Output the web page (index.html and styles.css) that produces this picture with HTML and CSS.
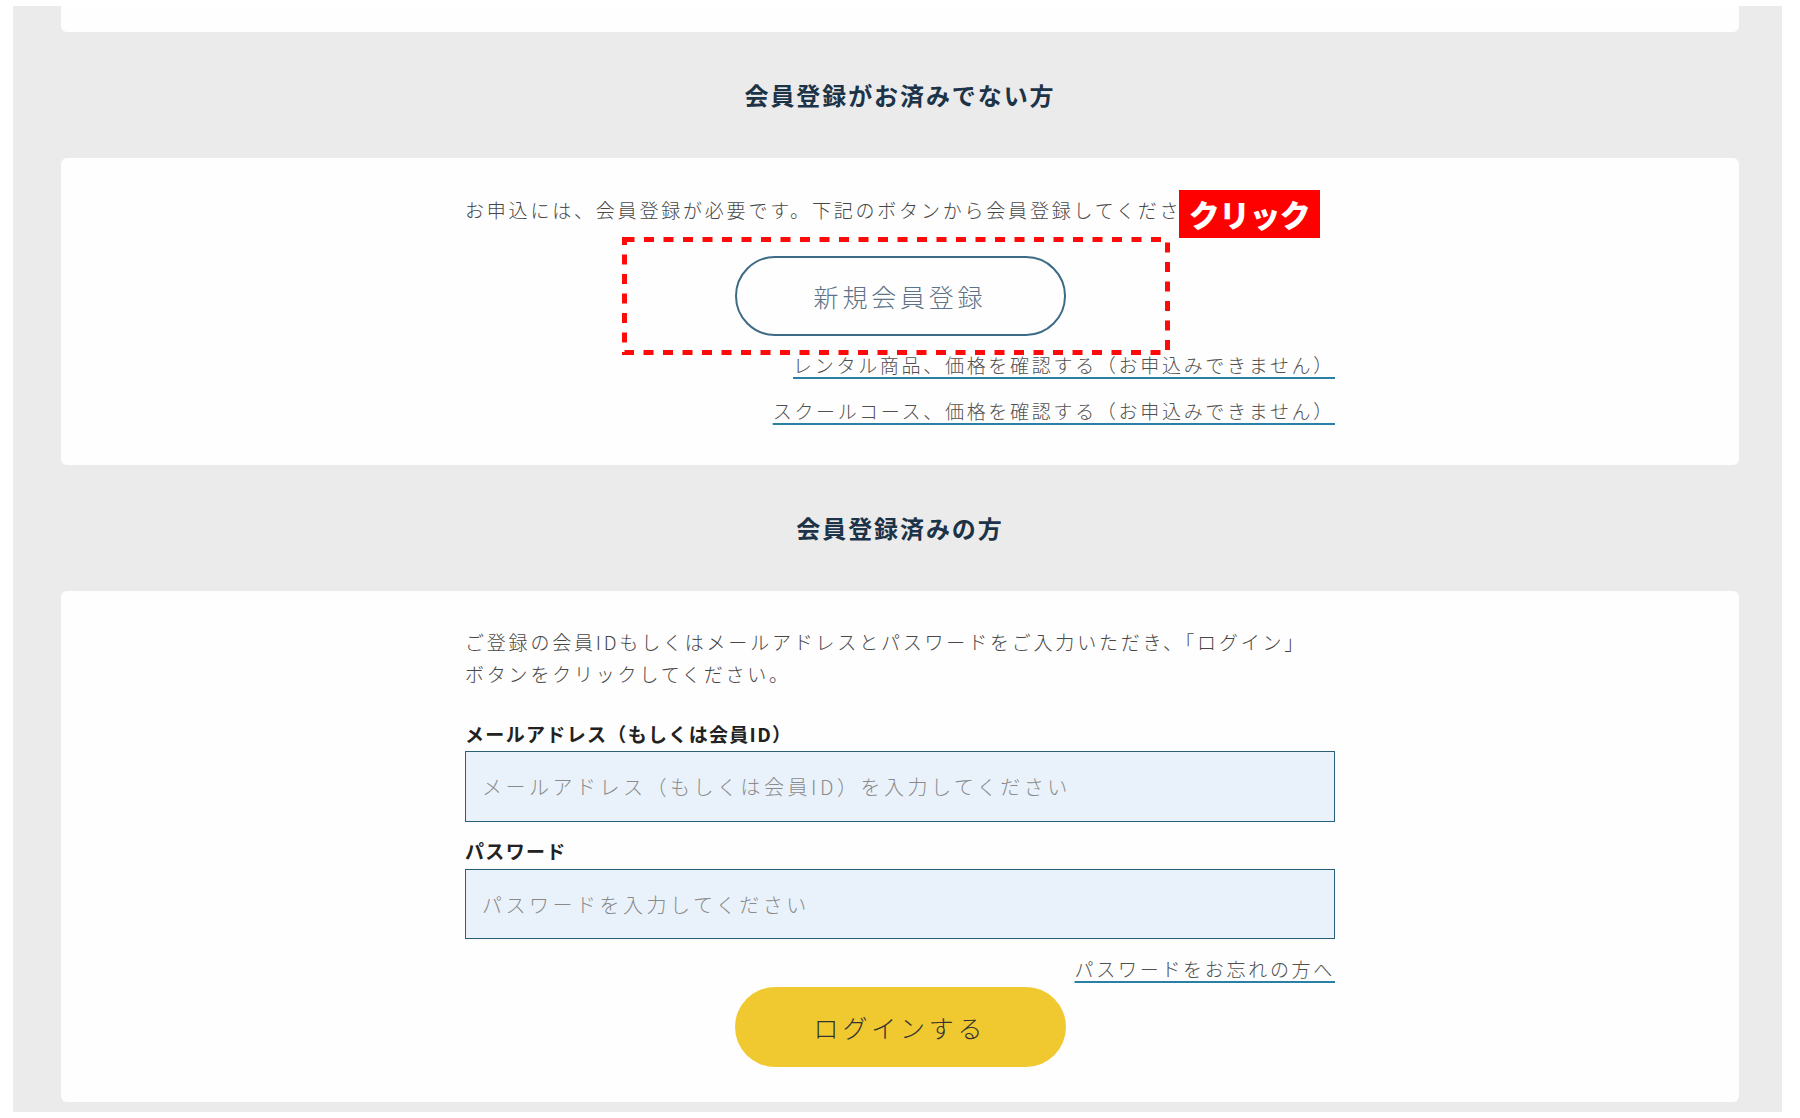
FILE: index.html
```html
<!DOCTYPE html>
<html lang="ja">
<head>
  <meta charset="UTF-8">
  <meta name="viewport" content="width=device-width, initial-scale=1.0">
  <title>ログイン</title>
  <link rel="stylesheet" href="styles.css">
</head>
<body>
  <div class="page">
    <div class="panel">
      <div class="card card-top"></div>

      <h2 class="sec-title">会員登録がお済みでない方</h2>
      <section class="card card-signup">
        <div class="inner">
          <p class="lead">お申込には、会員登録が必要です。下記のボタンから会員登録してください。</p>
          <div class="btn-row">
            <a class="btn btn-outline" href="#">新規会員登録</a>
          </div>
          <ul class="links">
            <li><a href="#">レンタル商品、価格を確認する（お申込みできません）</a></li>
            <li><a href="#">スクールコース、価格を確認する（お申込みできません）</a></li>
          </ul>
        </div>
        <!-- 注釈 -->
        <svg class="mark" width="548" height="118" viewBox="0 0 548 118">
          <rect x="2.5" y="2.5" width="543" height="113" fill="none" stroke="#ff0a0a" stroke-width="5" stroke-dasharray="10 9.5"/>
        </svg>
        <div class="badge">クリック</div>
      </section>

      <h2 class="sec-title">会員登録済みの方</h2>
      <section class="card card-login">
        <div class="inner">
          <p class="lead">ご登録の会員IDもしくはメールアドレスとパスワードをご入力いただき、「ログイン」<br>ボタンをクリックしてください。</p>
          <label class="field-label first" for="mail">メールアドレス（もしくは会員ID）</label>
          <input class="field" id="mail" type="text" placeholder="メールアドレス（もしくは会員ID）を入力してください">
          <label class="field-label" for="pass">パスワード</label>
          <input class="field field-pass" id="pass" type="password" placeholder="パスワードを入力してください">
          <div class="forgot"><a href="#">パスワードをお忘れの方へ</a></div>
          <div class="btn-row login-row">
            <button class="btn btn-login" type="button">ログインする</button>
          </div>
        </div>
      </section>
    </div>
  </div>
</body>
</html>
```

FILE: styles.css
```css
body {
  margin: 0;
  background-color: #fff;
  font-family: "Noto Sans CJK JP", "Noto Sans", sans-serif;
  color: #474747;
}
.page {
  padding-top: 6px;
}
.panel {
  margin-left: 13px;
  width: 1769px;
  box-sizing: border-box;
  padding: 0 43px 10px 48px;
  background-color: #ebebeb;
}
.card {
  background-color: #fefefe;
  border-radius: 6px;
  position: relative;
}
.card-top {
  height: 26px;
  border-radius: 0 0 6px 6px;
}
.sec-title {
  margin: 0;
  padding: 44px 0;
  line-height: 38px;
  font-size: 24px;
  font-weight: bold;
  letter-spacing: 0.08em;
  text-align: center;
  color: #1d3348;
}
.inner {
  width: 870px;
  margin: 0 auto;
}
.lead {
  margin: 0;
  font-size: 19px;
  font-weight: 300;
  line-height: 32px;
  letter-spacing: 2.8px;
  white-space: nowrap;
}

/* 新規登録 */
.card-signup {
  padding: 36px 0 38px;
}
.btn-row {
  margin-top: 30px;
  display: flex;
  justify-content: center;
}
.btn {
  box-sizing: border-box;
  width: 331px;
  height: 80px;
  border-radius: 40px;
  display: flex;
  align-items: center;
  justify-content: center;
  font-family: inherit;
  font-size: 25px;
  font-weight: 300;
  letter-spacing: 3.8px;
  text-decoration: none;
}
.btn-outline {
  border: 2px solid #3d6a85;
  color: #5d7388;
}
.links {
  list-style: none;
  margin: 13px 0 0;
  padding: 0;
  text-align: right;
}
.links li + li {
  margin-top: 14px;
}
.links a, .forgot a {
  font-size: 19px;
  font-weight: 300;
  line-height: 32px;
  letter-spacing: 2.7px;
  color: #505050;
  text-decoration: underline;
  text-decoration-color: #2a7fa5;
  text-decoration-thickness: 1.5px;
  text-underline-offset: 4px;
}
.mark {
  position: absolute;
  left: 561px;
  top: 79px;
}
.badge {
  position: absolute;
  left: 1118px;
  top: 32px;
  width: 141px;
  height: 48px;
  background-color: #ff0000;
  color: #fff;
  font-size: 31px;
  font-weight: 900;
  line-height: 48px;
  text-align: center;
  letter-spacing: -0.02em;
}

/* ログイン */
.card-login {
  padding: 35px 0;
}
.field-label {
  display: block;
  margin-top: 15px;
  font-size: 19px;
  font-weight: bold;
  line-height: 28px;
  letter-spacing: 0.07em;
  color: #222;
}
.field-label.first {
  margin-top: 30px;
}
.field {
  display: block;
  box-sizing: border-box;
  width: 870px;
  height: 71px;
  margin-top: 3px;
  padding: 0 16px;
  border: 1.5px solid #2b5e78;
  border-radius: 0;
  background-color: #e9f2fb;
  font-family: inherit;
  font-size: 20px;
  font-weight: 300;
  letter-spacing: 3.5px;
  color: #333;
  outline: none;
}
.field-pass {
  height: 70px;
  margin-top: 4px;
}
.field::placeholder {
  color: #8a8a8a;
}
.forgot {
  margin-top: 14px;
  height: 32px;
  text-align: right;
}
.login-row {
  margin-top: 2px;
}
.btn-login {
  border: none;
  background-color: #f0c931;
  color: #333;
  cursor: pointer;
}
```
